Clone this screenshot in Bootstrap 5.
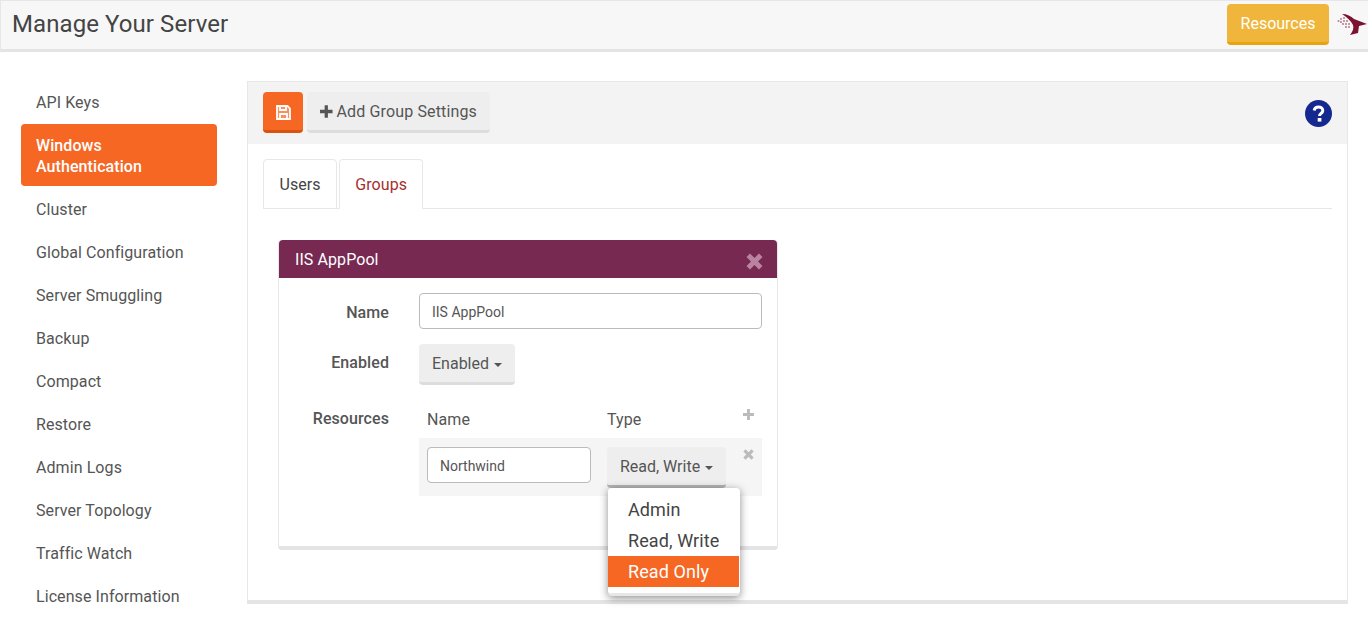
<!DOCTYPE html>
<html lang="en">
<head>
  <meta charset="UTF-8">
  <title>Manage Your Server</title>
  <link rel="stylesheet" href="https://cdn.jsdelivr.net/npm/bootstrap@5.3.0/dist/css/bootstrap.min.css">
  <style>
    html, body { height: 100%; overflow: hidden; }
    body { font-family: Roboto, "Liberation Sans", sans-serif; font-size: 16px; line-height: 21px; letter-spacing: .08px; color: #555; background: #fff; }
    .top-bar { width: 1368px; height: 52px; background: #f7f7f7; border-left: 1px solid #e7e7e7; border-top: 1px solid #e7e7e7; border-bottom: 3px solid #e4e4e4; padding: 3px 1px 0 11px; }
    .top-title { font-size: 24px; line-height: 40px; font-weight: 400; color: #444; margin: 0; }
    .btn-res { width: 102px; height: 41px; padding: 1px 0 0; font-size: 16px; line-height: 36px; color: #fff; background: #f0b63c; border: 0; border-bottom: 3px solid #e6a50f; border-radius: 4px; }
    .side-col { width: 196px; margin-left: 21px; margin-right: 30px; padding-top: 29px; flex: none; }
    .side-col .nav-link { padding: 11px 15px 9px; color: #555; font-size: 16px; line-height: 21px; border-radius: 4px; margin-bottom: 2px; }
    .side-col .nav-link.active { background: #f66724; color: #fff; font-weight: 500; }
    .main-panel { width: 1101px; height: 523px; margin-top: 29px; border: 1px solid #e7e7e7; border-bottom: 4px solid #e4e4e4; flex: none; }
    .panel-tools { height: 62px; background: #f3f3f3; padding: 10px 15px; }
    .btn-flat { height: 41px; padding: 0 13px; font-size: 16px; line-height: 21px; color: #555; background: #eee; border: 0; border-bottom: 3px solid #ddd; border-radius: 4px; white-space: nowrap; }
    .btn-save { width: 40px; padding: 0; background: #f66724; border-bottom-color: #d9530f; }
    .btn-add { width: 183px; letter-spacing: .14px; }
    .help-mark { margin-top: 8px; }
    .panel-body-area { padding: 15px 15px 0; }
    .panel-body-area .nav-tabs { border-bottom: 1px solid #e7e7e7; gap: 2px; }
    .panel-body-area .nav-tabs .nav-link { height: 50px; padding: 14px 15.5px; margin: 0 0 -1px; color: #444; border: 1px solid #e7e7e7; border-radius: 4px 4px 0 0; line-height: 21px; }
    .panel-body-area .nav-tabs .nav-link.active { padding: 14px 15px; color: #a5302e; border-bottom-color: #fff; }
    .group-card { width: 500px; height: 310px; margin: 31px 0 0 15px; border: 1px solid #e7e7e7; border-top: 0; border-bottom: 4px solid #e4e4e4; border-radius: 4px; }
    .group-card .card-header { height: 38px; padding: 9px 15px 9px 16px; background: #782952; color: #fff; font-weight: 400; line-height: 21px; border: 0; border-radius: 4px 4px 0 0; }
    .close-mark { margin-top: 4px; margin-right: -1px; }
    .field-row { display: flex; margin-top: 15px; }
    .field-row.res-field { margin-top: 19px; }
    .field-label { width: 110px; margin-right: 30px; text-align: right; font-weight: 500; flex: none; }
    .label-name { padding-top: 9px; }
    .label-plain { padding-top: 8px; }
    .label-res { padding-top: 4px; }
    .text-box { height: 36px; padding: 7px 12px 5px; font-size: 14px; letter-spacing: 0; color: #555; border: 1px solid #bbb; border-radius: 4px; box-shadow: none; flex: none; }
    .name-box { width: 343px; }
    .caret-mark::after { display: inline-block; content: ""; width: 0; height: 0; margin-left: 5px; vertical-align: 2px; border-top: 4px solid #555; border-left: 4px solid transparent; border-right: 4px solid transparent; }
    .res-table { width: 343px; }
    .res-head { height: 34px; padding: 5px 8px 0; }
    .res-head-name { width: 180px; }
    .remove-mark { margin-top: 2px; }
    .res-row { background: #f5f5f5; height: 58px; padding: 9px 8px; }
    .res-name { width: 164px; }
    .type-wrap { margin-left: 16px; }
    .btn-type { width: 119px; padding: 0; border-bottom-color: #b5b5b5; }
    .type-menu { display: block; top: 41px; left: 1px; width: 132px; min-width: 0; height: 108px; padding: 6px 1px 0 0; font-size: 18px; line-height: 21px; letter-spacing: .1px; border: 0; border-bottom: 3px solid #e7e7e7; border-radius: 4px; box-shadow: 0 2px 9px rgba(0, 0, 0, .45); }
    .type-menu .dropdown-item { height: 31px; padding: 5px 20px; color: #444; line-height: 21px; }
    .type-menu .dropdown-item.active { background: #f66724; color: #fff; }
  </style>
</head>
<body>
  <header class="top-bar d-flex align-items-start justify-content-between">
    <h1 class="top-title">Manage Your Server</h1>
    <div class="d-flex align-items-center gap-2">
      <button class="btn-res" type="button">Resources</button>
      <svg width="30" height="25" viewBox="0 0 30 25">
        <path fill="#7a1230" d="M5 2c5 0 9 2 12 5l13 5-8 2-1 7-8 2c3-4 4-7 3-10-2-4-6-8-11-11z"/>
        <g fill="#b7788c"><circle cx="1.500" cy="9" r="1"/><circle cx="4" cy="7" r="1"/><circle cx="7" cy="6" r="1"/><circle cx="4" cy="10" r="1"/><circle cx="7" cy="9" r="1"/><circle cx="10" cy="9" r="1"/><circle cx="6" cy="12" r="1"/><circle cx="9" cy="12" r="1"/><circle cx="12" cy="12" r="1"/><circle cx="9" cy="15" r="1"/><circle cx="12" cy="15" r="1"/></g>
      </svg>
    </div>
  </header>

  <div class="d-flex">
    <nav class="side-col nav flex-column">
      <a class="nav-link" href="#">API Keys</a>
      <a class="nav-link active" href="#">Windows Authentication</a>
      <a class="nav-link" href="#">Cluster</a>
      <a class="nav-link" href="#">Global Configuration</a>
      <a class="nav-link" href="#">Server Smuggling</a>
      <a class="nav-link" href="#">Backup</a>
      <a class="nav-link" href="#">Compact</a>
      <a class="nav-link" href="#">Restore</a>
      <a class="nav-link" href="#">Admin Logs</a>
      <a class="nav-link" href="#">Server Topology</a>
      <a class="nav-link" href="#">Traffic Watch</a>
      <a class="nav-link" href="#">License Information</a>
    </nav>

    <main class="main-panel">
      <div class="panel-tools d-flex align-items-start gap-1">
        <button class="btn-flat btn-save" type="button">
          <svg width="15" height="15" viewBox="0 0 15 15" fill="none" stroke="#fff" stroke-width="1.800"><path d="M1 1h10.500L14 3.500V14H1z" fill="#ffd9c4" fill-opacity=".35"/><path d="M4 1.500v3.500h6V1.500M4 14V9h7v5"/></svg>
        </button>
        <button class="btn-flat btn-add d-flex align-items-center" type="button">
          <svg class="me-1" width="13" height="13" viewBox="0 0 13 13" fill="#555"><path d="M4.800 0h3.400v4.800H13v3.400H8.200V13H4.800V8.200H0V4.800h4.800z"/></svg>
          Add Group Settings
        </button>
        <svg class="ms-auto help-mark" width="27" height="27" viewBox="0 0 27 27">
          <circle cx="13.500" cy="13.500" r="13.500" fill="#14288f"/>
          <path d="M9.200 10.500c.3-2.400 2-3.500 4.300-3.500 2.500 0 4.300 1.400 4.300 3.500 0 2.900-3.300 2.800-3.300 5.500" fill="none" stroke="#fff" stroke-width="3"/>
          <rect x="12.700" y="18" width="3.700" height="3.600" fill="#fff"/>
        </svg>
      </div>

      <div class="panel-body-area">
        <ul class="nav nav-tabs">
          <li class="nav-item"><a class="nav-link" href="#">Users</a></li>
          <li class="nav-item"><a class="nav-link active" href="#">Groups</a></li>
        </ul>

        <div class="card group-card">
          <div class="card-header d-flex justify-content-between">
            <span>IIS AppPool</span>
            <svg class="close-mark" width="17" height="17" viewBox="0 0 17 17" fill="#b884a0"><path d="M4 .5 8.500 5 13 .5 16.500 4 12 8.500 16.500 13 13 16.500 8.500 12 4 16.500.5 13 5 8.500.5 4z"/></svg>
          </div>
          <div class="card-body p-0">
            <div class="field-row">
              <label class="field-label label-name">Name</label>
              <input class="form-control text-box name-box" value="IIS AppPool">
            </div>
            <div class="field-row">
              <label class="field-label label-plain">Enabled</label>
              <button class="btn-flat caret-mark" type="button">Enabled</button>
            </div>
            <div class="field-row res-field">
              <label class="field-label label-res">Resources</label>
              <div class="res-table">
                <div class="res-head d-flex">
                  <span class="res-head-name">Name</span>
                  <span>Type</span>
                  <svg class="ms-auto" width="11" height="11" viewBox="0 0 13 13" fill="#bbb"><path d="M4.800 0h3.400v4.800H13v3.400H8.200V13H4.800V8.200H0V4.800h4.800z"/></svg>
                </div>
                <div class="res-row d-flex">
                  <input class="form-control text-box res-name" value="Northwind">
                  <div class="type-wrap position-relative">
                    <button class="btn-flat btn-type caret-mark" type="button">Read, Write</button>
                    <div class="dropdown-menu type-menu">
                      <a class="dropdown-item" href="#">Admin</a>
                      <a class="dropdown-item" href="#">Read, Write</a>
                      <a class="dropdown-item active" href="#">Read Only</a>
                    </div>
                  </div>
                  <svg class="ms-auto remove-mark" width="11" height="11" viewBox="0 0 17 17" fill="#bbb"><path d="M4 .5 8.500 5 13 .5 16.500 4 12 8.500 16.500 13 13 16.500 8.500 12 4 16.500.5 13 5 8.500.5 4z"/></svg>
                </div>
              </div>
            </div>
          </div>
        </div>
      </div>
    </main>
  </div>
</body>
</html>
